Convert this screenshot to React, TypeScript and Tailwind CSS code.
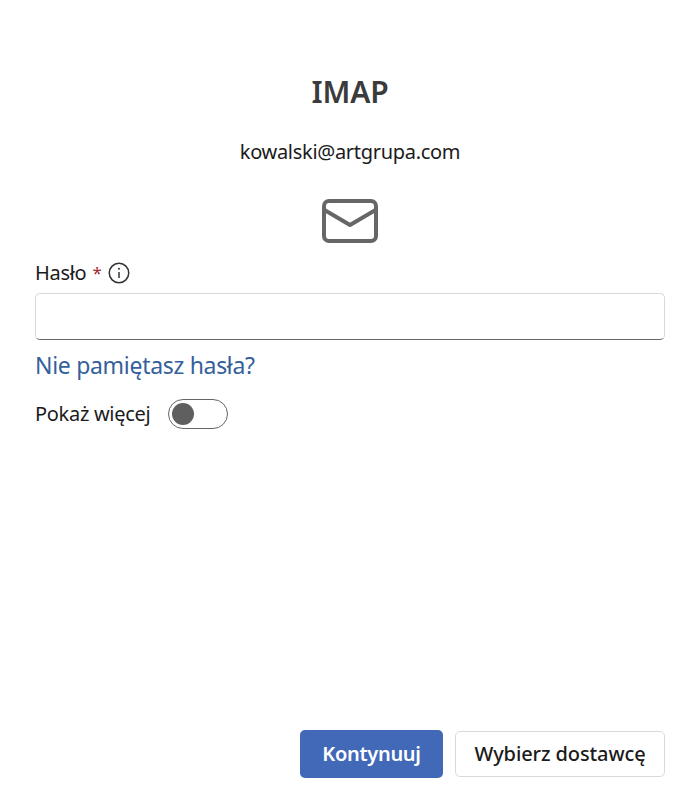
/**
 * IMAP login step
 * Password prompt of the mail account setup dialog.
 */

import { useState } from 'react';

function MailIcon() {
  return (
    <svg width="58" height="46" viewBox="0 0 58 46" fill="none" stroke="#666666" strokeWidth="4">
      <rect x="3" y="3" width="52" height="40" rx="5" />
      <path d="M3.5 12 L29 27 L54.5 12" strokeLinejoin="round" />
    </svg>
  );
}

function InfoIcon() {
  return (
    <svg width="22" height="22" viewBox="0 0 22 22" fill="none" stroke="#333333" strokeWidth="1.5">
      <circle cx="11" cy="11" r="9.75" />
      <path d="M11 10 V16" />
      <circle cx="11" cy="6.8" r="1" fill="#333333" stroke="none" />
    </svg>
  );
}

export default function App() {
  const [password, setPassword] = useState('');

  return (
    <div className="flex h-[812px] w-[700px] flex-col bg-white px-[35px] pb-[34px] pt-[72px] font-['Noto_Sans','Open_Sans',sans-serif] text-[#1b1b1b]">
      {/* Header */}
      <h1 className="text-center text-[30px] font-semibold leading-[40px] tracking-[-0.2px] text-[#3b3b3b]">IMAP</h1>
      <p className="mt-[27px] text-center text-[20px] leading-[26px] tracking-[-0.3px]">kowalski@artgrupa.com</p>
      <div className="mt-[33px] flex justify-center">
        <MailIcon />
      </div>

      {/* Password field */}
      <div className="mt-[15px] flex h-[28px] items-center text-[20px] tracking-[-0.3px]">
        <span>Hasło</span>
        <span className="ml-[6px] text-[17px] text-[#a4262c]">*</span>
        <span className="ml-[7px] flex">
          <InfoIcon />
        </span>
      </div>
      <input
        type="password"
        aria-label="Hasło"
        value={password}
        onChange={(e) => setPassword(e.target.value)}
        className="mt-[6px] h-[47px] w-full rounded-[5px] border border-[#d9d9d9] border-b-[#666666] bg-white px-3 outline-none"
      />
      <a href="#" className="mt-[10px] text-[23px] leading-[30px] tracking-[-0.3px] text-[#35609b]">
        Nie pamiętasz hasła?
      </a>

      {/* Show more toggle */}
      <div className="mt-[19px] flex items-center">
        <span className="text-[20px] leading-[30px] tracking-[-0.3px]">Pokaż więcej</span>
        <div className="ml-[18px] flex h-[30px] w-[60px] items-center rounded-full border border-[#666666] bg-white pl-[3px]">
          <div className="size-[22px] rounded-full bg-[#5f5f5f]" />
        </div>
      </div>

      {/* Actions */}
      <div className="mt-auto flex items-center justify-end gap-[12px]">
        <button className="h-[48px] w-[143px] rounded-[5px] bg-[#4169b8] text-[20px] font-semibold tracking-[-0.3px] text-white">
          Kontynuuj
        </button>
        <button className="h-[46px] w-[210px] rounded-[5px] border border-[#d9d9d9] bg-white text-[20px] font-medium tracking-[-0.1px] text-[#1b1b1b]">
          Wybierz dostawcę
        </button>
      </div>
    </div>
  );
}
